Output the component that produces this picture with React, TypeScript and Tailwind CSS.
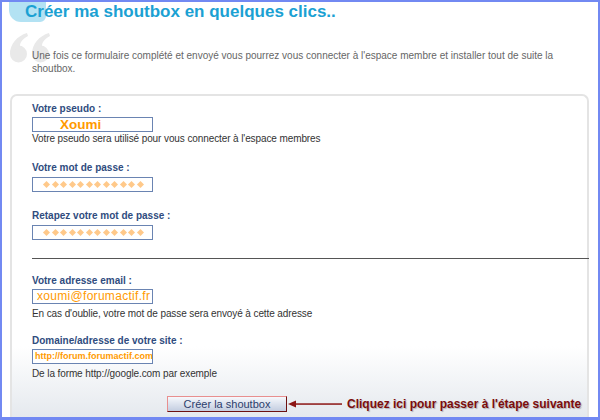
import React from "react";

const font = { fontFamily: '"Liberation Sans", Arial, sans-serif' };

function Stars() {
    return (
        <div className="flex items-center gap-[3.5px] pl-[11px] h-full">
            {Array.from({ length: 12 }).map((_, i) => (
                <span key={i} className="w-[5px] h-[5px] bg-[#ffc98a] rotate-45" />
            ))}
        </div>
    );
}

function Label({ children, className = "" }: { children: React.ReactNode; className?: string }) {
    return <div className={`text-[10px] leading-[12px] font-bold text-[#2f4c7e] ${className}`}>{children}</div>;
}

function Help({ children, className = "" }: { children: React.ReactNode; className?: string }) {
    return <div className={`text-[10px] leading-[12px] tracking-[-0.1px] text-[#333] ${className}`}>{children}</div>;
}

function Field({ children, className = "" }: { children?: React.ReactNode; className?: string }) {
    return (
        <div className={`w-[121px] h-[15px] border border-[#6a84b2] bg-white overflow-hidden ${className}`}>
            {children}
        </div>
    );
}

export default function App() {
    return (
        <div style={font} className="w-[600px] h-[420px] bg-white border-2 border-b-[3px] border-[#7289f2] flex flex-col relative overflow-hidden">
            {/* title */}
            <div className="relative h-[22px]">
                <div className="absolute left-[7px] top-0 w-[37px] h-[20px] bg-[#b3e2f3] rounded-bl-[12px] rounded-br-[6px]" />
                <h1 className="relative pl-[23px] text-[17px] leading-[20px] font-bold text-[#1ba1d3]">
                    Créer ma shoutbox en quelques clics..
                </h1>
            </div>

            {/* intro */}
            <div className="relative mt-[22px] h-[48px]">
                <svg className="absolute left-[7px] top-[-13px]" width="42" height="30" viewBox="0 0 42 30">
                    <circle cx="9.5" cy="21" r="8.5" fill="#e9e9e9" />
                    <path d="M1 21 C1 11 8 3 18 0 L19 3 C13 6 11 10 11 13 Z" fill="#e9e9e9" />
                    <circle cx="31.5" cy="21" r="8.5" fill="#e9e9e9" />
                    <path d="M23 21 C23 11 30 3 40 0 L41 3 C35 6 33 10 33 13 Z" fill="#e9e9e9" />
                </svg>
                <p className="relative ml-[30px] pt-[3px] w-[522px] text-[10px] leading-[13px] text-[#666]">
                    Une fois ce formulaire complété et envoyé vous pourrez vous connecter à l'espace membre et installer tout de suite la shoutbox.
                </p>
            </div>

            {/* form card */}
            <div className="flex-1 ml-[8px] mr-[9px] border-2 border-b-0 border-[#e4e4e4] rounded-t-[7px] bg-gradient-to-b from-white from-[78%] to-[#e5e9ee] px-[20px]">
                <Label className="mt-[7px]">Votre pseudo :</Label>
                <Field className="mt-[2px]">
                    <div className="pl-[27px] text-[13.5px] leading-[13px] font-bold text-[#ff9a00]">Xoumi</div>
                </Field>
                <Help className="mt-[1px]">Votre pseudo sera utilisé pour vous connecter à l'espace membres</Help>

                <Label className="mt-[17px]">Votre mot de passe :</Label>
                <Field className="mt-[3px]">
                    <Stars />
                </Field>

                <Label className="mt-[18px]">Retapez votre mot de passe :</Label>
                <Field className="mt-[3px]">
                    <Stars />
                </Field>

                <div className="mt-[18px] h-px bg-[#555] mr-[-22px]" />

                <Label className="mt-[16px]">Votre adresse email :</Label>
                <Field className="mt-[2px]">
                    <div className="pl-[4px] text-[12px] leading-[13px] tracking-[0.3px] text-[#ff9a00]">xoumi@forumactif.fr</div>
                </Field>
                <Help className="mt-[4px]">En cas d'oublie, votre mot de passe sera envoyé à cette adresse</Help>

                <Label className="mt-[15px]">Domaine/adresse de votre site :</Label>
                <Field className="mt-[2px]">
                    <div className="pl-[2px] text-[9px] leading-[13px] font-bold text-[#ff9a00] whitespace-nowrap">http://forum.forumactif.com</div>
                </Field>
                <Help className="mt-[4px]">De la forme http://google.com par exemple</Help>

                {/* submit */}
                <div className="mt-[16px] ml-[135px] flex items-center whitespace-nowrap">
                    <button className="shrink-0 w-[120px] h-[16px] border border-[#e88f8f] border-r-[#6d1010] border-b-[#6d1010] bg-gradient-to-b from-[#f6f8fc] to-[#c3cde0] text-[11px] leading-[13px] text-[#2c3d6c] flex items-center justify-center">
                        Créer la shoutbox
                    </button>
                    <svg className="shrink-0 ml-[1px]" width="56" height="8" viewBox="0 0 56 8">
                        <path d="M0 4 L8 0.5 L8 7.5 Z" fill="#8c1414" />
                        <rect x="7" y="3.3" width="47" height="1.5" fill="#8c1414" />
                    </svg>
                    <span className="shrink-0 ml-[3px] text-[12px] leading-[14px] font-bold text-[#7c0c0c] [text-shadow:1px_1px_1px_rgba(0,0,0,0.25)]">
                        Cliquez ici pour passer à l'étape suivante
                    </span>
                </div>
            </div>
        </div>
    );
}
